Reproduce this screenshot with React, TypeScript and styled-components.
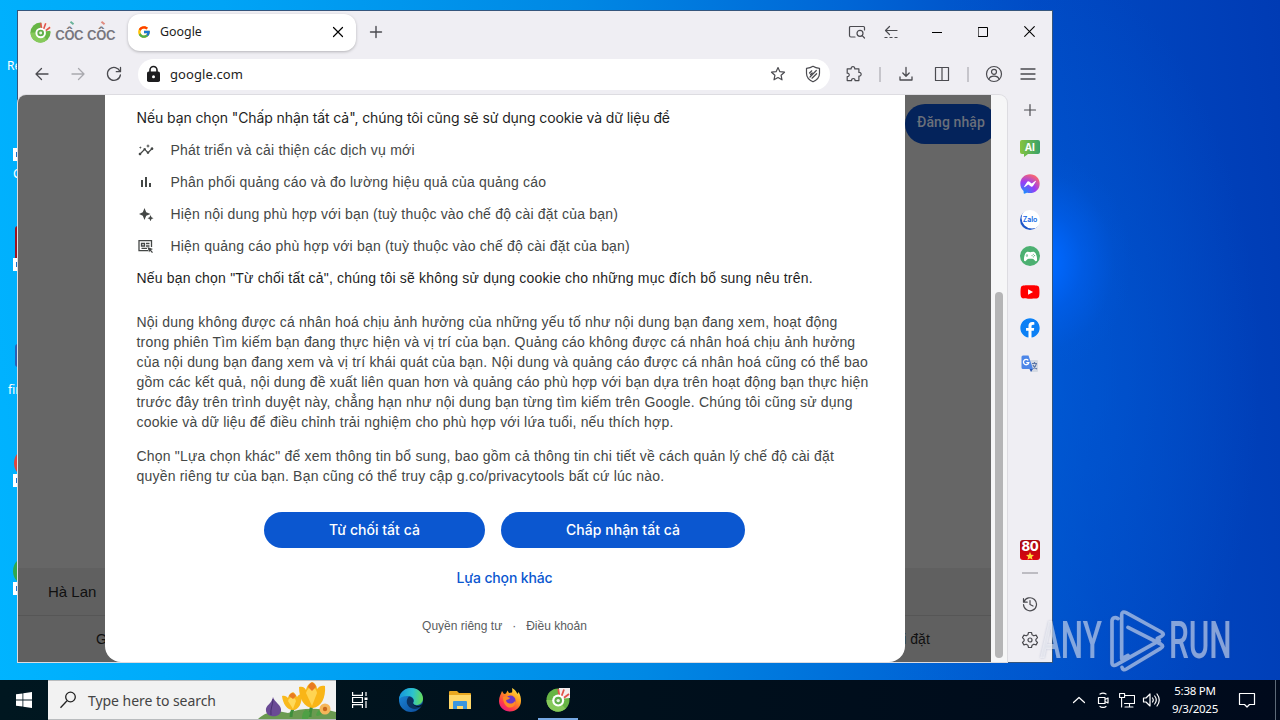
import styled, { createGlobalStyle } from "styled-components";
import { FcGoogle } from "react-icons/fc";
import { FaFacebookMessenger, FaFacebook, FaYoutube } from "react-icons/fa";
import { MdInsights } from "react-icons/md";
import { IoLogoGameControllerB } from "react-icons/io";

const GlobalStyle = createGlobalStyle`
  * {
    box-sizing: border-box;
  }
  body {
    margin: 0;
    overflow: hidden;
    font-family: "Liberation Sans", Arial, sans-serif;
  }
  svg {
    display: block;
    flex: none;
  }
  button {
    font: inherit;
    padding: 0;
    border: none;
    background: none;
  }
`;

const Desktop = styled.div`
  position: relative;
  display: flex;
  flex-direction: column;
  justify-content: flex-end;
  width: 1280px;
  height: 720px;
  overflow: hidden;
  background: radial-gradient(
      ellipse 90px 110px at 1042px 262px,
      #0068ff 10%,
      rgba(0, 98, 245, 0.55) 45%,
      rgba(0, 90, 225, 0.15) 80%,
      rgba(0, 85, 215, 0) 100%
    ),
    radial-gradient(
      ellipse 220px 420px at 1040px 380px,
      rgba(0, 92, 216, 0.7),
      rgba(0, 80, 200, 0)
    ),
    linear-gradient(
      84deg,
      #00b4ff 0%,
      #00a4f6 22%,
      #0088e4 48%,
      #0066d6 68%,
      #004ac4 82%,
      #003bb4 100%
    );
`;

const DesktopLabel = styled.span<{ $x: number; $y: number }>`
  position: absolute;
  left: ${(props) => props.$x}px;
  top: ${(props) => props.$y}px;
  color: #fff;
  font: 12px/16px "Noto Sans", sans-serif;
  white-space: nowrap;
`;

const DesktopIcon = styled.span<{
  $x: number;
  $y: number;
  $h: number;
  $color: string;
  $round?: boolean;
}>`
  position: absolute;
  left: ${(props) => props.$x}px;
  top: ${(props) => props.$y}px;
  width: 30px;
  height: ${(props) => props.$h}px;
  border-radius: ${(props) => (props.$round ? "50%" : "3px")};
  background: ${(props) => props.$color};
`;

const Shortcut = styled.span<{ $y: number }>`
  position: absolute;
  left: 13px;
  top: ${(props) => props.$y}px;
  width: 12px;
  height: 13px;
  background: #fff;
  &::after {
    content: "";
    position: absolute;
    left: 3px;
    top: 4px;
    width: 5px;
    height: 5px;
    background: #1a70c8;
  }
`;

const Window = styled.main`
  position: absolute;
  left: 17px;
  top: 10px;
  width: 1036px;
  height: 653px;
  display: flex;
  flex-direction: column;
  border: 1px solid #35557c;
  background: #efeef3;
`;

const TabStrip = styled.header`
  display: flex;
  align-items: center;
  height: 42px;
  padding-left: 12px;
`;

const Brand = styled.div`
  display: flex;
  align-items: center;
  gap: 4px;
  width: 98px;
`;

const BrandName = styled.span`
  position: relative;
  padding-top: 3px;
  color: #77767e;
  font: 500 17.5px/20px Inter, sans-serif;
  letter-spacing: -0.9px;
  white-space: nowrap;
`;

const BrandAccent = styled.i<{ $x: number; $color: string }>`
  position: absolute;
  left: ${(props) => props.$x}px;
  top: 1px;
  width: 4px;
  height: 2px;
  background: ${(props) => props.$color};
  transform: rotate(40deg);
`;

const Tab = styled.div`
  display: flex;
  align-items: center;
  width: 228px;
  height: 37px;
  padding: 0 11px 1px 9px;
  border-radius: 12px;
  background: #fff;
  box-shadow: 0 1px 3px rgba(0, 0, 0, 0.25);
`;

const TabTitle = styled.span`
  flex: 1;
  padding-left: 9px;
  color: #1d1d20;
  font: 12.4px/16px "Noto Sans", sans-serif;
`;

const IconButton = styled.button<{ $w?: number; $color?: string }>`
  display: flex;
  align-items: center;
  justify-content: center;
  flex: none;
  width: ${(props) => props.$w ?? 36}px;
  height: 30px;
  color: ${(props) => props.$color ?? "#4b4b50"};
`;

const WindowControls = styled.div`
  display: flex;
  margin-left: auto;
`;

const SystemButtons = styled.div`
  display: flex;
  margin-left: 6px;
  padding-bottom: 1px;
`;

const Toolbar = styled.div`
  display: flex;
  align-items: center;
  height: 42px;
  padding: 0 8px 0 6px;
`;

const AddressBar = styled.div`
  display: flex;
  align-items: center;
  flex: 1;
  height: 31px;
  margin: 0 6px;
  padding-left: 8px;
  border-radius: 16px;
  background: #fff;
`;

const Url = styled.span`
  flex: 1;
  padding-left: 9px;
  color: #1d1d20;
  font: 13px/18px "Noto Sans", sans-serif;
  letter-spacing: 0.08px;
`;

const Separator = styled.span`
  width: 2px;
  height: 15px;
  margin: 0 7px;
  background: #c6c5cb;
`;

const Body = styled.div`
  display: flex;
  flex: 1;
  min-height: 0;
`;

const Viewport = styled.section`
  position: relative;
  display: flex;
  width: 989px;
  overflow: hidden;
  border-radius: 8px 8px 0 0;
  box-shadow: 0 0 0 1px #dddce1;
  background: #f6f6f7;
`;

const Page = styled.div`
  display: flex;
  flex-direction: column;
  width: 973px;
  overflow: hidden;
  background: #666;
`;

const PageHeader = styled.div`
  display: flex;
  justify-content: flex-end;
  flex: 1;
  padding-top: 9px;
`;

const SignIn = styled.button`
  width: 92px;
  height: 40px;
  margin-right: -6px;
  padding-bottom: 4px;
  border-radius: 20px;
  background: #04235b;
  color: #6a6f7a;
  font: 500 14px/20px Roboto, sans-serif;
  letter-spacing: 0.1px;
`;

const FooterRow = styled.div<{ $border?: boolean }>`
  display: flex;
  align-items: center;
  justify-content: space-between;
  height: ${(props) => (props.$border ? 48 : 46)}px;
  padding: ${(props) => (props.$border ? "0 30px" : "0 61px 0 78px")};
  border-bottom: ${(props) => (props.$border ? "1px solid #565656" : "none")};
  background: #606060;
  color: #101010;
  font-size: ${(props) => (props.$border ? 15 : 14)}px;
  letter-spacing: ${(props) => (props.$border ? 0 : 0.1)}px;
`;

const ScrollTrack = styled.div`
  width: 16px;
  padding: 197px 4px 4px 4px;
`;

const ScrollThumb = styled.div`
  height: 100%;
  border-radius: 4px;
  background: #b5b5b6;
`;

const Consent = styled.div`
  position: absolute;
  left: 87px;
  top: 0;
  width: 800px;
  height: 567px;
  padding: 7px 32.5px 0 31.5px;
  border-radius: 0 0 16px 16px;
  background: #fff;
  color: #444746;
  font-size: 14px;
  letter-spacing: 0.2px;
`;

const Lead = styled.p<{ $alt?: boolean }>`
  margin: 0;
  color: #1f1f1f;
  line-height: 32px;
  font-family: ${(props) =>
    props.$alt ? "Inter, sans-serif" : '"Liberation Sans", sans-serif'};
  letter-spacing: ${(props) => (props.$alt ? -0.1 : 0.2)}px;
`;

const Purposes = styled.ul`
  margin: 0;
  padding: 0;
  list-style: none;
`;

const Purpose = styled.li`
  display: flex;
  align-items: center;
  gap: 16px;
  height: 32px;
`;

const Copy = styled.p<{ $gap: number }>`
  margin: ${(props) => props.$gap}px 0 0;
  line-height: 20px;
  white-space: pre;
`;

const Actions = styled.div`
  display: flex;
  justify-content: center;
  gap: 16px;
  margin-top: 26px;
`;

const ActionButton = styled.button<{ $w: number }>`
  width: ${(props) => props.$w}px;
  height: 36px;
  border-radius: 18px;
  background: #0b57d0;
  color: #fff;
  font: 500 14px/20px Inter, sans-serif;
  letter-spacing: 0.03px;
`;

const MoreLink = styled.a`
  display: block;
  margin-top: 20px;
  color: #0b57d0;
  text-align: center;
  font: 500 14px/20px Inter, sans-serif;
  letter-spacing: -0.14px;
`;

const Legal = styled.div`
  display: flex;
  justify-content: center;
  gap: 10px;
  margin-top: 29px;
  color: #5a5d60;
  font-size: 12px;
  line-height: 18px;
  letter-spacing: 0;
`;

const Sidebar = styled.aside`
  display: flex;
  flex-direction: column;
  align-items: center;
  width: 45px;
  padding: 0 0 4px 1px;
`;

const SideItem = styled.div<{ $h?: number; $push?: boolean }>`
  display: flex;
  align-items: center;
  justify-content: center;
  flex: none;
  height: ${(props) => props.$h ?? 36}px;
  margin-top: ${(props) => (props.$push ? "auto" : "0")};
  color: #4b4b50;
`;

const SideDivider = styled.hr`
  width: 16px;
  height: 2px;
  margin: 4px 0 12px;
  border: none;
  background: #bdbcc2;
`;

const AiBadge = styled.span`
  display: flex;
  position: relative;
  align-items: center;
  justify-content: center;
  width: 20px;
  height: 14px;
  margin-bottom: 2px;
  border-radius: 2px;
  background: linear-gradient(90deg, #86c440, #38a169);
  color: #fff;
  font: 700 10px/14px "Open Sans", sans-serif;
  &::after {
    content: "";
    position: absolute;
    left: 4px;
    bottom: -3px;
    border: solid transparent;
    border-width: 3px 4px 0 0;
    border-top-color: #6bbb48;
  }
`;

const ZaloBadge = styled.span`
  display: flex;
  align-items: center;
  justify-content: center;
  width: 20px;
  height: 20px;
  border-radius: 50%;
  background: #fff;
  box-shadow: inset 2px -2px 0 -0.5px #1c55c8;
  color: #0b63e5;
  font: 600 7px/20px Inter, sans-serif;
  letter-spacing: -0.1px;
`;

const GameBadge = styled.span`
  display: flex;
  align-items: center;
  justify-content: center;
  width: 20px;
  height: 20px;
  border-radius: 50%;
  background: #4cb071;
  color: #fff;
`;

const YoutubeBadge = styled.span`
  color: #f00;
  background: linear-gradient(#fff, #fff) center / 8px 8px no-repeat;
`;

const FacebookBadge = styled.span`
  border-radius: 50%;
  color: #0c80f5;
  background: #fff;
`;

const EightyBadge = styled.span`
  display: flex;
  flex-direction: column;
  align-items: center;
  width: 20px;
  height: 20px;
  border-radius: 3px;
  background: linear-gradient(#a80c12, #dc0510);
  color: #fff;
  font: 800 13px/13px Inter, sans-serif;
  letter-spacing: -0.2px;
  svg {
    margin-top: -1px;
  }
`;

const Taskbar = styled.footer`
  display: flex;
  align-items: center;
  height: 40px;
  background: linear-gradient(90deg, #001720, #00101c 50%, #000a1c);
  color: #fff;
`;

const TaskButton = styled.button<{ $w: number; $active?: boolean }>`
  display: flex;
  align-items: center;
  justify-content: center;
  flex: none;
  width: ${(props) => props.$w}px;
  height: 40px;
  color: #fff;
  box-shadow: ${(props) => (props.$active ? "inset 0 -2px #76a9e4" : "none")};
`;

const TaskGap = styled.span`
  width: 5px;
`;

const SearchBox = styled.div`
  display: flex;
  align-items: center;
  width: 288px;
  height: 40px;
  padding-left: 12px;
  border: solid #b9bcbe;
  border-width: 1px 0;
  background: #f2f2f2;
`;

const SearchHint = styled.span`
  flex: 1;
  padding: 2px 0 0 12px;
  color: #444;
  font: 14px/20px "Noto Sans", sans-serif;
  letter-spacing: -0.05px;
`;

const TaskApps = styled.div`
  display: flex;
  margin-left: 4px;
`;

const Tray = styled.div`
  display: flex;
  align-items: center;
  height: 40px;
  margin-left: auto;
`;

const Clock = styled.div`
  width: 62px;
  padding-left: 2px;
  text-align: center;
  font: 11.5px/18px "Noto Sans", sans-serif;
  letter-spacing: -0.25px;
`;

const ShowDesktop = styled.span`
  width: 5px;
  height: 40px;
  margin-left: 6px;
  border-left: 1px solid #5d6a78;
`;

const Watermark = styled.div`
  position: absolute;
  left: 1040px;
  top: 608px;
  width: 200px;
  height: 66px;
  color: rgba(255, 255, 255, 0.5);
  filter: drop-shadow(0 0 1px rgba(60, 80, 140, 0.5));
`;

const WatermarkWord = styled.span<{ $x: number }>`
  position: absolute;
  left: ${(props) => props.$x}px;
  top: 3px;
  font: 500 51.5px/60px Roboto, sans-serif;
  transform: scaleX(0.61);
  transform-origin: left;
`;

const WatermarkLogo = styled.svg`
  position: absolute;
  left: 68px;
  top: 0;
`;

const line = {
  fill: "none",
  stroke: "currentColor",
  strokeWidth: 1.2,
  strokeLinecap: "round" as const,
  strokeLinejoin: "round" as const,
};

const Glyph = ({
  d,
  size = 16,
  width = 1.2,
}: {
  d: string;
  size?: number;
  width?: number;
}) => (
  <svg width={size} height={size} viewBox={`0 0 ${size} ${size}`}>
    <path d={d} {...line} strokeWidth={width} />
  </svg>
);

const CocCocMark = ({ size }: { size: number }) => (
  <svg width={size} height={size} viewBox="0 0 24 24">
    <circle cx="12" cy="12" r="11.5" fill="#67b545" />
    <path d="M0.5 12a11.5 11.5 0 0 0 19 8.7L12 12z" fill="#86c95b" />
    <path d="M12 11 13 0h11v10z" fill="#f4eeee" />
    <path
      d="m13.2 7-1-6M15.6 8l2.4-6.5M18 9.8l5-3.8"
      stroke="#e2534a"
      strokeWidth="1.8"
    />
    <circle cx="12.2" cy="12.6" r="6" fill="#fff" />
    <circle cx="12.2" cy="12.6" r="3.8" fill="#5fae49" />
    <circle cx="12.2" cy="12.6" r="1.7" fill="#eaf5e4" />
  </svg>
);

const LockIcon = () => (
  <svg width="15" height="18" viewBox="0 0 15 18">
    <path d="M4 8V5a3.5 3.5 0 0 1 7 0v3" fill="none" stroke="#1d1d1f" strokeWidth="1.6" />
    <rect x="1" y="6.5" width="13" height="10.5" rx="1.8" fill="#1d1d1f" />
    <circle cx="7.5" cy="11.7" r="1.5" fill="#fff" />
  </svg>
);

const StarIcon = () => (
  <Glyph d="m8 1.5 1.9 4.2 4.6.5-3.4 3.1.9 4.5L8 11.5l-4 2.3.9-4.5L1.5 6.2l4.6-.5z" />
);

const ShieldIcon = () => (
  <Glyph
    size={18}
    d="M9 1.3c2 1.3 4 1.8 6.5 2v5c0 4-2.6 6.8-6.5 8.5-3.9-1.7-6.500-4.500-6.500-8.500v-5C5 3.100 7 2.600 9 1.300zM5.500 8l2.300-2.200M6 12l6.300-6.500M8 13.200l4.600-4.500M6.500 9.500l1.700-1.700"
  />
);

const PuzzleIcon = () => (
  <Glyph
    size={18}
    d="M2.2 3.800h4c-.5-3 4-3 3.500 0h4.200v3.700c3-.5 3 4 0 3.500v4.600H10c.4-2.800-3.800-2.800-3.400 0H2.200V11.500c2.700.3 2.700-3.600 0-3.300z"
  />
);

const UserIcon = () => (
  <svg width="18" height="18" viewBox="0 0 18 18" {...line}>
    <circle cx="9" cy="9" r="7.5" />
    <circle cx="9" cy="6.8" r="2.5" />
    <path d="M4 14.200c1-4 9-4 10 0" />
  </svg>
);

const TabSearchIcon = () => (
  <svg width="18" height="16" viewBox="0 0 18 16" {...line}>
    <path d="M7 13H3a1.500 1.500 0 0 1-1.500-1.500v-8A1 1 0 0 1 2.500 2.500h13a1 1 0 0 1 1 1V6" />
    <circle cx="12" cy="9.3" r="3" />
    <path d="m14.200 11.700 2.300 2.300" />
  </svg>
);

const TabBackIcon = () => (
  <svg width="14" height="16" viewBox="0 0 14 16" {...line}>
    <path d="M13 6.500H1.500M5.500 2.500l-4 4 4 4" />
    <path d="M.5 13.500h13" strokeDasharray="3 2" strokeLinecap="butt" />
  </svg>
);

const GearIcon = () => (
  <svg width="18" height="18" viewBox="0 0 18 18" {...line}>
    <circle cx="9" cy="9" r="2" />
    <path d="m7.500 1.500-.6 2.300-1.700 1-2.300-.7L1.500 6.600 3.100 8.300v1.500L1.500 11.400l1.400 2.500 2.300-.7 1.700 1 .6 2.300h3l.6-2.300 1.700-1 2.300.7 1.400-2.500-1.600-1.600V8.300l1.600-1.700-1.400-2.500-2.300.7-1.700-1-.6-2.300z" />
  </svg>
);

const InsightsIcon = () => (
  <svg width="18" height="18" viewBox="0 0 18 18" fill="#444746">
    <MdInsights x="1" y="1" size={16} />
  </svg>
);

const BarsIcon = () => (
  <svg width="18" height="18" viewBox="0 0 18 18" fill="#444746">
    <rect x="4" y="7" width="2" height="7" />
    <rect x="8" y="4" width="2" height="10" />
    <rect x="12" y="10" width="2" height="4" />
  </svg>
);

const SparkIcon = () => (
  <svg width="18" height="18" viewBox="0 0 18 18" fill="#444746">
    <path d="M7.500 3 9.200 7.300l4.300 1.700-4.300 1.700L7.500 15l-1.700-4.300L2 9l3.800-1.700z" />
    <path d="m13.500 10 1 2.300 2 .9-2 .9-1 2.200-1-2.200-2-.9 2-.9z" />
  </svg>
);

const AdsIcon = () => (
  <svg width="18" height="18" viewBox="0 0 18 18" fill="none" stroke="#444746" strokeWidth="1.3">
    <path d="M11 13.700H2V3.700h12.500V10" />
    <path d="M4.500 6.500h3v2.500h-3zM9 6.500h3.500M9 9h3.500M4.500 11.300H10" />
    <path d="m10.500 10 5.500 2-2 .9 2 2.400-1 .8-2-2.300-1 1.600z" fill="#444746" stroke="none" />
  </svg>
);

const MessengerIcon = () => (
  <svg width="20" height="20" viewBox="0 0 20 20">
    <defs>
      <radialGradient id="messenger" cx="0.2" cy="1" r="1.1">
        <stop offset="0" stopColor="#1292ff" />
        <stop offset="0.55" stopColor="#9a3cf5" />
        <stop offset="1" stopColor="#ff6968" />
      </radialGradient>
    </defs>
    <circle cx="10" cy="10" r="8" fill="#fff" />
    <FaFacebookMessenger size={20} fill="url(#messenger)" />
  </svg>
);

const TranslateIcon = () => (
  <svg width="20" height="20" viewBox="0 0 20 20">
    <path d="M8 6h9a1 1 0 0 1 1 1v10a1 1 0 0 1-1 1h-6z" fill="#d5dae3" />
    <path d="M3 1.500h5.500L13 15H3a1.500 1.500 0 0 1-1.500-1.500V3A1.500 1.500 0 0 1 3 1.500z" fill="#4c86e8" />
    <path d="M9.500 15H13l-2 3z" fill="#2a56b0" />
    <path
      d="M8.300 6.400A2.700 2.700 0 1 0 8.800 8.600H6.300"
      fill="none"
      stroke="#fff"
      strokeWidth="1.3"
    />
    <path
      d="M12 9.500h5M14.500 8v1.500M16.500 9.500c-.5 2.500-2 4-3.500 5M13 11c.8 2 2 3 4 4"
      fill="none"
      stroke="#5d77a8"
      strokeWidth="1.2"
    />
  </svg>
);

const FlowersArt = () => (
  <svg width="78" height="38" viewBox="0 0 78 38">
    <path d="M0 38c8-8 20-9 30-6 12-5 30-6 48-1v7z" fill="#6a9a50" />
    <path d="M33 36c0-6 2-8 4-12M52 36c0-8 2-12 4-18" stroke="#3f8f3c" strokeWidth="3" fill="none" />
    <path d="M44 38c0-8 4-12 8-6l-2 6zM58 34c2-6 6-8 9-7-1 4-4 8-8 8z" fill="#4fa045" />
    <path d="M15 16c1 5 9 8 8 14-1 7-14 7-15 0-1-6 6-7 7-14z" fill="#6a4a95" />
    <path d="M15 18c0 6-3 10-2 16" stroke="#473070" fill="none" />
    <path d="M24 15c3-1 5 1 6 2 1-4 3-5 5-6 2 1 3 3 4 5 2-3 4-3 5-3 0 9-3 16-9 16s-10-6-11-14z" fill="#f9b91c" />
    <path d="M30 20c2-5 6-5 8 0l-3 8z" fill="#ffd95a" />
    <path d="M41 6c4-1 6 1 7 3 1-5 4-7 6-8 3 1 5 4 5 7 2-3 5-4 8-3 1 12-4 21-12 22C46 27 41 17 41 6z" fill="#f9b517" />
    <path d="M48 12c2-7 9-9 11 0l-5 13z" fill="#ffd452" />
    <path d="M50 6c2-6 6-6 8 0l-4 4zM31 15c2-4 5-4 7 0l-3 3z" fill="#e87a22" />
    <circle cx="67" cy="28" r="5.5" fill="#f5b65a" />
    <circle cx="67" cy="28" r="2.2" fill="#c96a1c" />
  </svg>
);

const EdgeIcon = () => (
  <svg width="26" height="26" viewBox="0 0 26 26">
    <defs>
      <linearGradient id="edge-top" x1="0" y1="0.5" x2="1" y2="0.6">
        <stop offset="0" stopColor="#1595dc" />
        <stop offset="0.55" stopColor="#2cc3cf" />
        <stop offset="1" stopColor="#66dc55" />
      </linearGradient>
      <linearGradient id="edge-base" x1="0" y1="0" x2="1" y2="1">
        <stop offset="0" stopColor="#1c8ee0" />
        <stop offset="1" stopColor="#0c4795" />
      </linearGradient>
    </defs>
    <circle cx="13" cy="13" r="12" fill="url(#edge-base)" />
    <path d="M1 12.500C1.500 5.500 7 1 13 1c7 0 12 5 12 10.500 0 4-3 6.500-6.500 6.500-2.500 0-4-1-3.500-2 2-3 0-7-4.500-7S3 9.500 1 12.500z" fill="url(#edge-top)" />
    <path d="M11 9.500c-3.500 3-3 9 2 11.500 3.500 1.700 7 1 10.500-1.500-2-.3-6 1-8.500-3.500 2-3-.5-6-4-6.500z" fill="#0b3260" />
    <path d="M14.900 16.500c2 3 7 3.200 9.600 0-.3 1.500-.8 2.300-1.400 3.100-4 1-7-.2-8.200-3.100z" fill="#001520" />
  </svg>
);

const ExplorerIcon = () => (
  <svg width="22" height="20" viewBox="0 0 22 20">
    <path d="M0 2a1 1 0 0 1 1-1h7l2 2h11a1 1 0 0 1 1 1v14H0z" fill="#e9a820" />
    <path d="M0 5h22v14H0z" fill="#ffd869" />
    <path d="M4 19v-7a1 1 0 0 1 1-1h12a1 1 0 0 1 1 1v7h-4v-3H8v3z" fill="#3a96dd" />
  </svg>
);

const FirefoxIcon = () => (
  <svg width="24" height="24" viewBox="0 0 24 24">
    <defs>
      <linearGradient id="fox" x1="0.9" y1="0" x2="0.2" y2="1">
        <stop offset="0" stopColor="#fff04a" />
        <stop offset="0.4" stopColor="#ff9a1e" />
        <stop offset="0.75" stopColor="#ff3b4b" />
        <stop offset="1" stopColor="#e31587" />
      </linearGradient>
    </defs>
    <path d="M1 13C1 8.500 3 6 4 3l2 3 2-.5L9.500 2.500 11 5l3-.5c.5-2 .2-3 0-4.500 3 1.500 4.500 4 5.500 6l1-2C22.500 7 23 10 23 13c0 6-5 10.500-11 10.500S1 19 1 13z" fill="url(#fox)" />
    <circle cx="12.500" cy="12.500" r="5" fill="#6a37c8" />
    <path d="M5 9c3-2 5 0 7 1-1 2-3 1-4 2.500 1 4 7 4 9 .5 1 5-3 7-6 6.500S5 15 5 9z" fill="#ff8a25" />
  </svg>
);

const AnyRunLogo = () => (
  <WatermarkLogo
    width="60"
    height="66"
    viewBox="744 324 180 198"
    fill="none"
    stroke="currentColor"
    strokeWidth="11"
    strokeLinejoin="round"
    strokeLinecap="round"
  >
    <path
      d="M774 356c-10-6-18-2-18 8v124c0 9 7 10 14 6l128-72M785 476V345c0-9 6-11 13-7l106 58c8 5 8 9 0 13l-12 6M786 476l18-10M804 382l98 50c8 5 8 9 0 13L799 507c-7 4-12 2-13-5"
    />
  </WatermarkLogo>
);

const purposes = [
  { icon: <InsightsIcon />, text: "Phát triển và cải thiện các dịch vụ mới" },
  { icon: <BarsIcon />, text: "Phân phối quảng cáo và đo lường hiệu quả của quảng cáo" },
  { icon: <SparkIcon />, text: "Hiện nội dung phù hợp với bạn (tuỳ thuộc vào chế độ cài đặt của bạn)" },
  { icon: <AdsIcon />, text: "Hiện quảng cáo phù hợp với bạn (tuỳ thuộc vào chế độ cài đặt của bạn)" },
];

const personalisation = [
  "Nội dung không được cá nhân hoá chịu ảnh hưởng của những yếu tố như nội dung bạn đang xem, hoạt động",
  "trong phiên Tìm kiếm bạn đang thực hiện và vị trí của bạn. Quảng cáo không được cá nhân hoá chịu ảnh hưởng",
  "của nội dung bạn đang xem và vị trí khái quát của bạn. Nội dung và quảng cáo được cá nhân hoá cũng có thể bao",
  "gồm các kết quả, nội dung đề xuất liên quan hơn và quảng cáo phù hợp với bạn dựa trên hoạt động bạn thực hiện",
  "trước đây trên trình duyệt này, chẳng hạn như nội dung bạn từng tìm kiếm trên Google. Chúng tôi cũng sử dụng",
  "cookie và dữ liệu để điều chỉnh trải nghiệm cho phù hợp với lứa tuổi, nếu thích hợp.",
].join("\n");

const moreOptions = [
  'Chọn "Lựa chọn khác" để xem thông tin bổ sung, bao gồm cả thông tin chi tiết về cách quản lý chế độ cài đặt',
  "quyền riêng tư của bạn. Bạn cũng có thể truy cập g.co/privacytools bất cứ lúc nào.",
].join("\n");

const DesktopItems = () => (
  <>
    <DesktopLabel $x={7} $y={58}>Recycle Bin</DesktopLabel>
    <Shortcut $y={148} />
    <DesktopLabel $x={13} $y={166}>C</DesktopLabel>
    <DesktopIcon $x={15} $y={226} $h={36} $color="#9c1420" />
    <Shortcut $y={258} />
    <DesktopIcon $x={15} $y={344} $h={23} $color="#2b5fb4" />
    <DesktopLabel $x={8} $y={382}>firefox</DesktopLabel>
    <DesktopIcon $x={14} $y={448} $h={30} $color="#e0453c" $round />
    <Shortcut $y={474} />
    <DesktopIcon $x={13} $y={556} $h={30} $color="#2fa84f" $round />
    <Shortcut $y={582} />
  </>
);

const ConsentDialog = () => (
  <Consent>
    <Lead $alt>
      Nếu bạn chọn "Chấp nhận tất cả", chúng tôi cũng sẽ sử dụng cookie và dữ liệu để
    </Lead>
    <Purposes>
      {purposes.map((purpose) => (
        <Purpose key={purpose.text}>
          {purpose.icon}
          <span>{purpose.text}</span>
        </Purpose>
      ))}
    </Purposes>
    <Lead>
      Nếu bạn chọn "Từ chối tất cả", chúng tôi sẽ không sử dụng cookie cho những mục đích bổ sung nêu trên.
    </Lead>
    <Copy $gap={18}>{personalisation}</Copy>
    <Copy $gap={14}>{moreOptions}</Copy>
    <Actions>
      <ActionButton $w={221}>Từ chối tất cả</ActionButton>
      <ActionButton $w={244}>Chấp nhận tất cả</ActionButton>
    </Actions>
    <MoreLink>Lựa chọn khác</MoreLink>
    <Legal>
      <span>Quyền riêng tư</span>
      <span>·</span>
      <span>Điều khoản</span>
    </Legal>
  </Consent>
);

const BrowserSidebar = () => (
  <Sidebar>
    <SideItem $h={30}>
      <Glyph d="M8 2.500v11M2.500 8h11" />
    </SideItem>
    <SideItem $h={5} />
    <SideItem>
      <AiBadge>AI</AiBadge>
    </SideItem>
    <SideItem>
      <MessengerIcon />
    </SideItem>
    <SideItem>
      <ZaloBadge>Zalo</ZaloBadge>
    </SideItem>
    <SideItem>
      <GameBadge>
        <IoLogoGameControllerB size={15} />
      </GameBadge>
    </SideItem>
    <SideItem>
      <YoutubeBadge>
        <FaYoutube size={20} />
      </YoutubeBadge>
    </SideItem>
    <SideItem>
      <FacebookBadge>
        <FaFacebook size={20} />
      </FacebookBadge>
    </SideItem>
    <SideItem>
      <TranslateIcon />
    </SideItem>
    <SideItem $push>
      <EightyBadge>
        80
        <svg width="8" height="8" viewBox="0 0 10 10">
          <path d="m5 0 1.500 3.400 3.500.3-2.700 2.400.9 3.700L5 7.800 1.800 9.800l.9-3.700L0 3.700l3.500-.3z" fill="#ffd83a" />
        </svg>
      </EightyBadge>
    </SideItem>
    <SideDivider />
    <SideItem>
      <Glyph d="M1.500 2.500v3.700h3.700M1.900 6a6.500 6.500 0 1 1-.4 2.500M8 4.500V8.500l3 1.500" />
    </SideItem>
    <SideItem>
      <GearIcon />
    </SideItem>
  </Sidebar>
);

const WindowsTaskbar = () => (
  <Taskbar>
    <TaskButton $w={48}>
      <svg width="16" height="16" viewBox="0 0 16 16" fill="#fff">
        <path d="M0 2.300 6.500 1.400v6.200H0zM7.300 1.200 16 0v7.600H7.300zM0 8.400h6.500v6.200L0 13.700zM7.300 8.400H16V16l-8.700-1.200z" />
      </svg>
    </TaskButton>
    <SearchBox>
      <svg width="16" height="18" viewBox="0 0 16 18" fill="none" stroke="#222" strokeWidth="1.3">
        <circle cx="10.500" cy="6" r="4.800" />
        <path d="m7 9.700-6.500 7" />
      </svg>
      <SearchHint>Type here to search</SearchHint>
      <FlowersArt />
    </SearchBox>
    <TaskButton $w={48}>
      <svg width="16" height="16" viewBox="0 0 16 16" fill="none" stroke="#fff" strokeWidth="1.2">
        <path d="M.6 0v3.400h9.800V0M.6 5.500h9.800v5H.6zM.6 16v-3.400h9.800V16M14 0v4M14 9v7" />
        <path d="M12.500 5.500h3v2.500h-3z" fill="#fff" stroke="none" />
      </svg>
    </TaskButton>
    <TaskApps>
      <TaskButton $w={46}><EdgeIcon /></TaskButton>
      <TaskButton $w={52}><ExplorerIcon /></TaskButton>
      <TaskButton $w={47}><FirefoxIcon /></TaskButton>
      <TaskGap />
      <TaskButton $w={40} $active>
        <CocCocMark size={24} />
      </TaskButton>
    </TaskApps>
    <Tray>
      <TaskButton $w={24}>
        <Glyph d="M2.500 10.500 8 5.500l5.500 5" />
      </TaskButton>
      <TaskButton $w={24}>
        <Glyph d="M3.500 5.500h6.500v6H3.500zM10 7.500l3-1.500v5l-3-1.500M5 2c2-1.300 4-1.300 6 0M5 14.500c2 1.300 4 1.300 6 0" />
      </TaskButton>
      <TaskButton $w={24}>
        <Glyph width={1.1} d="M5.500 3.500h10v8h-10M.6 1.500h5v4h-5zM2.600 5.500v9.500M10.500 11.500V15M6 15h8" />
      </TaskButton>
      <TaskButton $w={24}>
        <Glyph size={18} d="M1.500 7h2.500l4-4v12l-4-4H1.500zM10.500 7c1 1.300 1 2.700 0 4M12.700 5c2 2.500 2 5.500 0 8M15 3c3 4 3 8 0 12" />
      </TaskButton>
      <Clock>
        5:38 PM
        <br />
        9/3/2025
      </Clock>
      <TaskButton $w={44}>
        <Glyph size={18} d="M1.500 2.500h15v11H11.500L9 16l-2.500-2.500h-5z" />
      </TaskButton>
      <ShowDesktop />
    </Tray>
  </Taskbar>
);

function App() {
  return (
    <Desktop>
      <GlobalStyle />
      <DesktopItems />
      <Window>
        <TabStrip>
          <Brand>
            <CocCocMark size={21} />
            <BrandName>
              côc côc
              <BrandAccent $x={15} $color="#6ab39a" />
              <BrandAccent $x={46} $color="#e08b80" />
            </BrandName>
          </Brand>
          <Tab>
            <FcGoogle size={14} />
            <TabTitle>Google</TabTitle>
            <Glyph size={14} d="m2.500 2.500 9 9M11.500 2.500l-9 9" width={1.2} />
          </Tab>
          <IconButton $w={40}>
            <Glyph size={14} d="M7 1.500v11M1.500 7h11" width={1.4} />
          </IconButton>
          <WindowControls>
            <IconButton $w={34}><TabSearchIcon /></IconButton>
            <IconButton $w={34}><TabBackIcon /></IconButton>
            <SystemButtons>
              <IconButton $w={46} $color="#000">
                <Glyph size={10} d="M0 5.500h10" width={1} />
              </IconButton>
              <IconButton $w={46} $color="#000">
                <Glyph size={10} d="M.5.5h9v9H.5z" width={1} />
              </IconButton>
              <IconButton $w={46} $color="#000">
                <Glyph size={11} d="m.7.7 9.600 9.600M10.300.7.7 10.300" width={1.1} />
              </IconButton>
            </SystemButtons>
          </WindowControls>
        </TabStrip>
        <Toolbar>
          <IconButton>
            <Glyph d="M14 8H2M7.500 2.500 2 8l5.500 5.500" width={1.3} />
          </IconButton>
          <IconButton $color="#a9a9ae">
            <Glyph d="M2 8h12M8.500 2.500 14 8l-5.500 5.500" width={1.3} />
          </IconButton>
          <IconButton>
            <Glyph d="M14.500 1.500v4.200h-4.200M14 5.500a6.500 6.500 0 1 0 .4 3.300" width={1.3} />
          </IconButton>
          <AddressBar>
            <LockIcon />
            <Url>google.com</Url>
            <IconButton><StarIcon /></IconButton>
            <IconButton $w={34}><ShieldIcon /></IconButton>
          </AddressBar>
          <IconButton><PuzzleIcon /></IconButton>
          <Separator />
          <IconButton>
            <Glyph d="M8 1.500v8.500M4.800 7 8 10.200 11.200 7M2 11v3h12v-3" width={1.3} />
          </IconButton>
          <IconButton>
            <Glyph d="M1.500 1.500h13v13h-13zM8 1.500v13" />
          </IconButton>
          <Separator />
          <IconButton><UserIcon /></IconButton>
          <IconButton $w={32}>
            <Glyph d="M1 3h14M1 8h14M1 13h14" width={1.3} />
          </IconButton>
        </Toolbar>
        <Body>
          <Viewport>
            <Page>
              <PageHeader>
                <SignIn>Đăng nhập</SignIn>
              </PageHeader>
              <FooterRow $border>Hà Lan</FooterRow>
              <FooterRow>
                <span>Giới thiệu</span>
                <span>Cài đặt</span>
              </FooterRow>
            </Page>
            <ScrollTrack>
              <ScrollThumb />
            </ScrollTrack>
            <ConsentDialog />
          </Viewport>
          <BrowserSidebar />
        </Body>
      </Window>
      <WindowsTaskbar />
      <Watermark>
        <WatermarkWord $x={0}>ANY</WatermarkWord>
        <AnyRunLogo />
        <WatermarkWord $x={129}>RUN</WatermarkWord>
      </Watermark>
    </Desktop>
  );
}

export default App;
